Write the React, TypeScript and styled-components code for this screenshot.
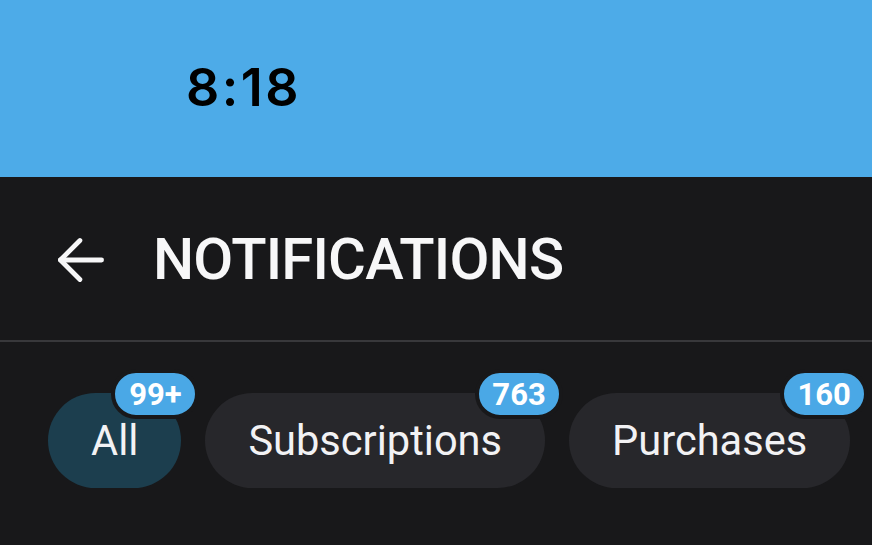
import React from 'react';
import styled, { createGlobalStyle } from 'styled-components';

const GlobalStyle = createGlobalStyle`
  html, body {
    margin: 0;
    padding: 0;
    background: #18181a;
    font-family: Roboto, "Noto Sans", sans-serif;
  }
`;

const Screen = styled.div`
  width: 872px;
  height: 545px;
  overflow: hidden;
  background: #18181a;
  display: flex;
  flex-direction: column;
`;

const StatusBar = styled.div`
  height: 177px;
  background: #4dabe8;
  display: flex;
  align-items: center;
  padding-left: 186px;
  box-sizing: border-box;
`;

const Clock = styled.span`
  font-family: Inter, Roboto, sans-serif;
  font-weight: 600;
  font-size: 52px;
  color: #000;
  letter-spacing: 2.5px;
  margin-top: -2px;
`;

const Header = styled.div`
  height: 165px;
  display: flex;
  align-items: center;
  padding-left: 55px;
  gap: 46px;
  border-bottom: 2px solid #38383b;
  box-sizing: border-box;
`;

const BackButton = styled.button`
  background: none;
  border: 0;
  padding: 0;
  display: flex;
  color: #f7f7f8;
  margin-top: 2px;
`;

const Title = styled.h1`
  margin: 0;
  font-family: Roboto, sans-serif;
  font-weight: 500;
  font-size: 58px;
  color: #f7f7f8;
  letter-spacing: -0.8px;
`;

const Chips = styled.div`
  display: flex;
  gap: 24px;
  padding: 51px 0 0 48px;
`;

const Chip = styled.div<{ $active?: boolean }>`
  position: relative;
  height: 95px;
  padding: 0 43px;
  border-radius: 48px;
  background: ${(p) => (p.$active ? '#1c3e4e' : '#27272b')};
  display: flex;
  align-items: center;
  font-size: 41.6px;
  color: #f2f2f4;
  box-sizing: border-box;
`;

const Badge = styled.span`
  position: absolute;
  top: -24px;
  right: -18px;
  height: 42px;
  padding: 0 10px;
  min-width: 60px;
  box-sizing: content-box;
  border: 4px solid #18181a;
  border-radius: 26px;
  background: #4aa8e6;
  color: #fff;
  font-weight: 700;
  font-size: 31px;
  display: flex;
  align-items: center;
  justify-content: center;
`;

const tabs = [
  { label: 'All', count: '99+', active: true },
  { label: 'Subscriptions', count: '763' },
  { label: 'Purchases', count: '160' },
];

export default function App() {
  return (
    <Screen>
      <GlobalStyle />
      <StatusBar>
        <Clock>8:18</Clock>
      </StatusBar>
      <Header>
        <BackButton aria-label="Back">
          <svg width="52" height="52" viewBox="0 0 24 24" fill="none" stroke="currentColor" strokeWidth="2.2" strokeLinecap="round" strokeLinejoin="round">
            <line x1="21.5" y1="12" x2="2.5" y2="12" />
            <polyline points="11.5,21 2.5,12 11.5,3" />
          </svg>
        </BackButton>
        <Title>NOTIFICATIONS</Title>
      </Header>
      <Chips>
        {tabs.map((t) => (
          <Chip key={t.label} $active={t.active}>
            {t.label}
            <Badge>{t.count}</Badge>
          </Chip>
        ))}
      </Chips>
    </Screen>
  );
}
